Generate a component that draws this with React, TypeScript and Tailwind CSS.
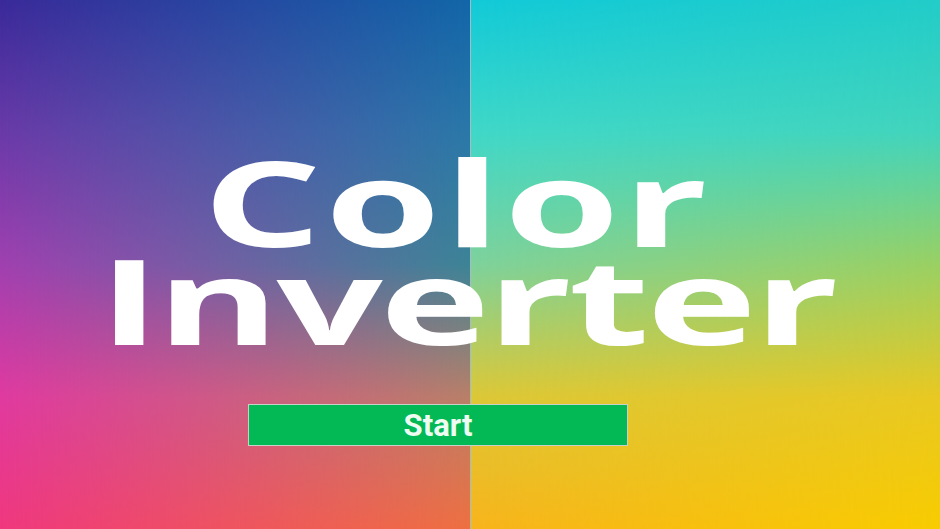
import React from 'react';

export default function App() {
  return (
    <div className="grid w-[940px] h-[529px] overflow-hidden">
      {/* background: two gradient halves */}
      <div className="col-start-1 row-start-1 grid grid-cols-2">
        <div className="grid">
          <div className="col-start-1 row-start-1 bg-[linear-gradient(to_bottom,#3a2a9a_0%,#6a3aa8_25%,#a040b0_50%,#e03aa0_75%,#f0387e_100%)]" />
          <div className="col-start-1 row-start-1 bg-[linear-gradient(to_bottom,#1266a8_0%,#2a78a8_25%,#3c8496_50%,#b88068_75%,#ee7040_100%)] [mask-image:linear-gradient(to_right,transparent,black)] [-webkit-mask-image:linear-gradient(to_right,transparent,black)]" />
        </div>
        <div className="grid border-l border-[#1a5a70]/40">
          <div className="col-start-1 row-start-1 bg-[linear-gradient(to_bottom,#12cad8_0%,#40d8c8_25%,#7ed29c_50%,#dcc838_75%,#f8b41c_100%)]" />
          <div className="col-start-1 row-start-1 bg-[linear-gradient(to_bottom,#22ccc8_0%,#42d4bc_25%,#9ad062_50%,#e8c822_75%,#f8cc00_100%)] [mask-image:linear-gradient(to_right,transparent,black)] [-webkit-mask-image:linear-gradient(to_right,transparent,black)]" />
        </div>
      </div>

      {/* foreground */}
      <div className="relative col-start-1 row-start-1 flex flex-col items-center pt-[152px]">
        <h1 className="flex flex-col items-center text-white font-[750] text-[119px] leading-[98px] font-['Open_Sans',sans-serif]">
          <span className="inline-block scale-x-[1.57] tracking-[2px] -translate-x-[13px]">Color</span>
          <span className="inline-block scale-x-[1.57] tracking-[-2px] -translate-x-[3px]">Inverter</span>
        </h1>
        <button className="mt-[56px] mr-[64px] w-[380px] h-[42px] bg-[#02b955] border border-[#c8d0c8] text-[#eefcf2] font-bold text-[31px] leading-none font-['Roboto',sans-serif] flex items-center justify-center">
          Start
        </button>
      </div>
    </div>
  );
}
